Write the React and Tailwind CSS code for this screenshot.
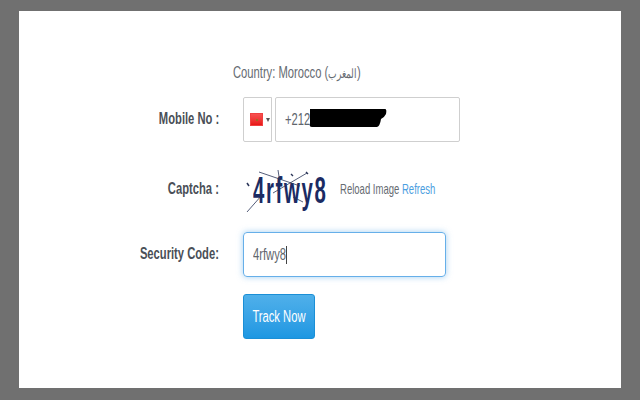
const sans = "font-['Liberation_Sans',Arial,sans-serif]";

function Squeezed({ children, className = "" }) {
  return <span className={`inline-block whitespace-nowrap scale-x-[0.7] ${className}`}>{children}</span>;
}

function Label({ children }) {
  return (
    <div className="w-[200px] shrink-0 flex justify-end pb-[1px]">
      <Squeezed className="origin-right font-bold text-[16px] leading-none text-[#4a4f57]">{children}</Squeezed>
    </div>
  );
}

function Captcha() {
  return (
    <div className="relative w-[88px] h-[50px] flex items-center pl-[8px] pt-[3px]">
      <span className="inline-block shrink-0 origin-left scale-x-[0.565] whitespace-nowrap font-bold text-[36px] leading-none tracking-[3px] text-[#1b2b63]">4rfwy8</span>
      <svg className="absolute inset-0" width="88" height="50" viewBox="0 0 88 50" fill="none" stroke="#2a3558" strokeWidth="0.8">
        <path d="M14 8 L55 22" />
        <path d="M33 6 L35 19" />
        <path d="M62 9 L28 29" />
        <path d="M2 48 L17 31" />
        <path d="M48 33 L58 38" />
        <path d="M2 19 L4 22" strokeWidth="1.5" />
        <path d="M46 10 L48 12 M61 8 L63 10" strokeWidth="1.4" />
      </svg>
    </div>
  );
}

export default function App() {
  return (
    <div className={`w-[640px] h-[400px] bg-[#707070] pt-[11px] pb-[12px] px-[19px] ${sans}`}>
      <div className="h-full bg-white flex flex-col">
        <div className="mt-[52px] h-[19px] flex items-center pl-[214px]">
          <Squeezed className="origin-left text-[16px] leading-none text-[#666b72]">Country: Morocco (<span className="text-[13px]">المغرب</span>)</Squeezed>
        </div>

        <div className="mt-[15px] flex items-center">
          <Label>Mobile No :</Label>
          <div className="ml-[24px] flex gap-[3px] h-[45px]">
            <div className="w-[29px] border border-[#cfcfcf] rounded-l-[2px] flex items-center pl-[6px] gap-[3px]">
              <div className="relative w-[13px] h-[13px] bg-gradient-to-b from-[#f75050] to-[#e81414] border border-[#f04040] flex items-center justify-center">
                <div className="w-[2px] h-[2px] rounded-full bg-[#8a7a20]" />
              </div>
              <div className="w-0 h-0 border-x-[2.5px] border-x-transparent border-t-[4px] border-t-[#555555]" />
            </div>
            <div className="relative w-[185px] border border-[#cfcfcf] rounded-[2px] flex items-center pl-[9px]">
              <Squeezed className="origin-left text-[16px] leading-none text-[#60656c]">+212</Squeezed>
              <svg className="absolute left-[33px] top-[10px]" width="78" height="21" viewBox="0 0 78 21">
                <path d="M1 1 H76 Q78 1 77 6 Q75 10 72 11 Q71 18 68 19 H3 Q0 19 1 16 Z" fill="#000000" />
              </svg>
            </div>
          </div>
        </div>

        <div className="mt-[22px] h-[50px] flex items-center">
          <Label>Captcha :</Label>
          <div className="ml-[26px]"><Captcha /></div>
          <div className="ml-[7px] w-[110px] pb-[1px]">
            <span className="inline-block whitespace-nowrap scale-x-[0.635] origin-left text-[15px] leading-none text-[#666b72]">
              Reload Image <span className="text-[#4a9ee0]">Refresh</span>
            </span>
          </div>
        </div>

        <div className="mt-[18px] flex items-center">
          <Label>Security Code:</Label>
          <div className="relative ml-[24px] w-[203px] h-[45px] border border-[#66afe9] rounded-[4px] shadow-[0_0_6px_rgba(102,175,233,0.6)] flex items-center pl-[9px]">
            <Squeezed className="origin-left text-[16px] leading-none text-[#60656c]">4rfwy8</Squeezed>
            <div className="absolute left-[42px] top-[13px] w-px h-[18px] bg-[#444444]" />
          </div>
        </div>

        <div className="mt-[17px] pl-[224px]">
          <div className="w-[72px] h-[45px] rounded-[3px] border border-[#1b8fd6] bg-gradient-to-b from-[#4fb0ea] to-[#1c97e2] flex items-center justify-center">
            <Squeezed className="text-[16px] leading-none text-white">Track Now</Squeezed>
          </div>
        </div>
      </div>
    </div>
  );
}
